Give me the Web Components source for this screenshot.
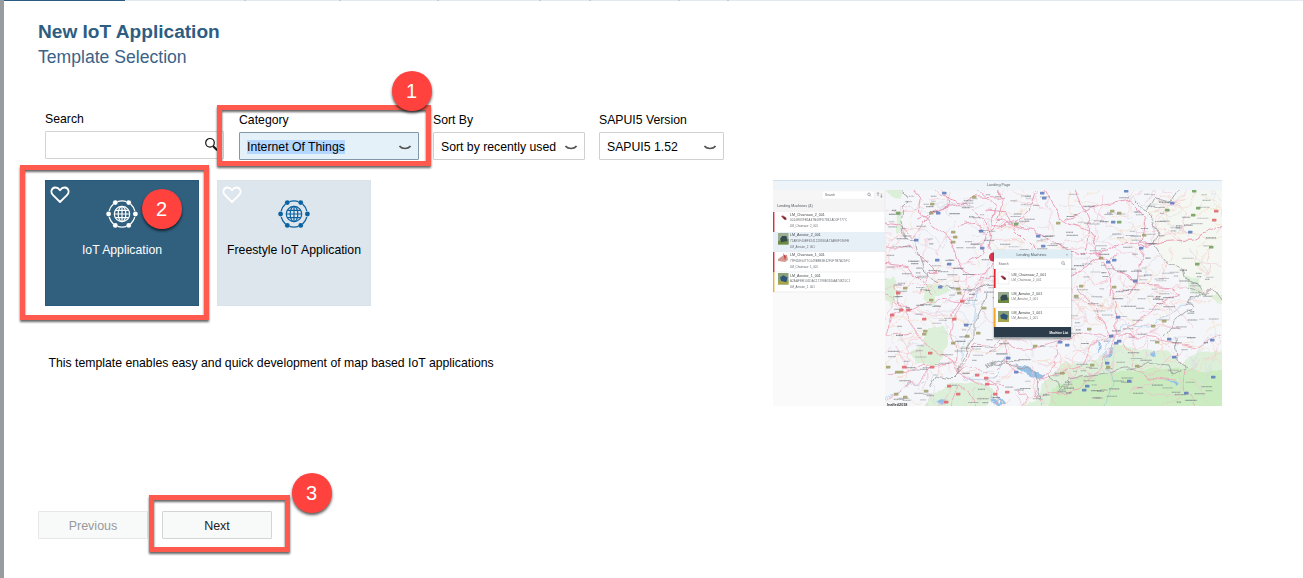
<!DOCTYPE html>
<html lang="en">
<head>
<meta charset="utf-8">
<title>New IoT Application</title>
<style>
html,body{margin:0;height:578px;overflow:hidden;background:#fff}
body{font-family:"Liberation Sans",Arial,sans-serif;font-size:12.26px;color:#000}
</style>
</head>
<body>
<iot-wizard></iot-wizard>
<script>
function define(name, html, setup) {
  const t = document.createElement('template');
  t.innerHTML = html;
  customElements.define(name, class extends HTMLElement {
    constructor() {
      super();
      this.attachShadow({mode: 'open'}).append(t.content.cloneNode(true));
    }
    connectedCallback() { if (setup) setup(this, this.shadowRoot); }
  });
}

define('field-label', `<style>:host{display:block;height:14px;line-height:14px;white-space:nowrap}</style><slot></slot>`);

define('search-field', `<style>
:host{display:block;width:179px}
.box{box-sizing:border-box;height:28px;margin-top:5px;border:1px solid #d3d3d3;border-radius:1px;display:flex;align-items:center;justify-content:flex-end;padding-right:4px}
</style><field-label><slot></slot></field-label>
<div class="box"><svg width="15" height="16" viewBox="0 0 15 16" fill="none" stroke="#111"><circle cx="6" cy="5.8" r="4.3" stroke-width="1.2"/><path d="M9.2 9.2 13.2 13.2" stroke-width="2"/></svg></div>`);

define('select-field', `<style>
:host{display:block}
.box{box-sizing:border-box;height:28px;margin-top:5px;border:1px solid #d0d0d0;border-radius:1px;display:flex;align-items:center;justify-content:space-between;padding:1px 7px 0 7px;white-space:nowrap}
:host([active]) .box{background:#e5f1f9;border-color:#8297a7}
:host([active]) .v{background:#b3d7fe}
.v{line-height:14px;margin-top:1px}
svg{display:block;margin-top:2px}
</style><field-label><slot></slot></field-label>
<div class="box"><span class="v"><slot name="value"></slot></span><svg width="12" height="6" viewBox="0 0 12 6" fill="none" stroke="#555" stroke-width="1.6"><path d="M.5 1Q2.2 3.4 6 3.5 9.8 3.4 11.5 1"/></svg></div>`);

define('template-tile', `<style>
:host{box-sizing:border-box;display:grid;grid-template-rows:18px 36px 17px;justify-items:center;width:154px;height:126px;background:#dde5ed;color:#000;--ink:#0b62a0;text-align:center;border:1px solid #dae2ea}
:host([selected]){background:#31607f;color:#fff;--ink:#fff;border-color:#28597b}
.heart{justify-self:start;margin:5px 0 0 4px}
.globe{color:var(--ink);margin-top:-1px}
.label{line-height:17px;white-space:nowrap;padding-top:7px}
</style>
<svg class="heart" width="20" height="18" viewBox="0 0 20 18" fill="none" stroke="#fff" stroke-width="1.8" stroke-linejoin="round"><path d="M10 16 2.8 8.8C.2 6.2 1.5 1.8 5.1 1.5 7.4 1.3 8.8 2.5 10 4.3 11.2 2.5 12.6 1.3 14.9 1.5 18.5 1.8 19.8 6.2 17.2 8.8Z"/></svg>
<svg class="globe" width="32" height="32" viewBox="-16 -16 32 32" fill="none" stroke="currentColor" stroke-width="1.2"><circle r="7.7"/><ellipse rx="3.8" ry="7.7"/><path d="M0-7.7V7.7M-7.7 0H7.7M-6.8-3.6H6.8M-6.8 3.6H6.8"/><path d="M-4.5-12.4Q0-13.8 4.5-12.4M8.4-10.2Q11.8-7 12.8-3M12.8 3Q11.8 7 8.4 10.2M4.5 12.4Q0 13.8-4.5 12.4M-8.4 10.2Q-11.8 7-12.8 3M-12.8-3Q-11.8-7-8.4-10.2"/><g fill="currentColor" stroke="none"><circle cx="-6.7" cy="-11.4" r="2.4"/><circle cx="6.7" cy="-11.4" r="2.4"/><circle cx="13.4" r="2.4"/><circle cx="6.7" cy="11.4" r="2.4"/><circle cx="-6.7" cy="11.4" r="2.4"/><circle cx="-13.4" r="2.4"/></g></svg>
<div class="label"><slot></slot></div>`);

define('wizard-button', `<style>
:host{box-sizing:border-box;display:flex;align-items:center;justify-content:center;width:110px;height:28px;padding-top:1px;border:1px solid #d2d4d5;border-radius:1px;background:#f8fafa;color:#222;font-size:12.5px}
:host([disabled]){border-color:#e6e8e8;color:#999}
</style><slot></slot>`);

define('callout-frame', `<style>
:host{position:absolute;box-sizing:border-box;border:5px solid #ff5a4d;filter:drop-shadow(0 2px 1px rgba(0,0,0,.6));pointer-events:none}
</style>`);

define('callout-number', `<style>
:host{position:absolute;display:flex;align-items:center;justify-content:center;box-sizing:border-box;padding:1px 1px 0 0;width:40px;height:40px;border-radius:50%;background:#ff423e;color:#fff;font-size:20px;box-shadow:0 2px 3px rgba(0,0,0,.65)}
</style><slot></slot>`);

define('top-strip', `<style>
:host{display:block;height:1px}
svg{display:block}
</style><svg width="1299" height="1"><path fill="#e3e8f1" d="M0 0H1299V1H0Z"/><path fill="#2b5b80" d="M0 0H121V1H0Z"/><path fill="#c5cad2" d="M240 0h2v1h-2zM335 0h2v1h-2zM433 0h2v1h-2zM535 0h2v1h-2zM585 0h2v1h-2zM674 0h2v1h-2zM723 0h2v1h-2z"/></svg>`);

define('map-preview', `<style>
:host{display:block;width:449px;height:226px}
svg{display:block;filter:blur(.35px)}
text{font-family:"Liberation Sans",Arial,sans-serif}
</style>
<svg width="449" height="226" viewBox="0 0 449 226">
<defs>
<clipPath id="m"><rect x="112" y="10" width="337" height="216"/></clipPath>
<filter id="wander" filterUnits="userSpaceOnUse" x="100" y="0" width="360" height="236" color-interpolation-filters="sRGB"><feTurbulence type="fractalNoise" baseFrequency=".07" numOctaves="2" seed="4"/><feDisplacementMap in="SourceGraphic" scale="10" xChannelSelector="R" yChannelSelector="G"/></filter>
<g id="car"><rect width="10" height="10" fill="#9aad91"/><path d="M0 7 10 5V10H0Z" fill="#6e8a45"/><path d="M2 5 4 2.5H8L9 7 3 8Z" fill="#344b50"/></g>
<g id="car2"><rect width="10" height="10" fill="#8aa17a"/><path d="M0 7 10 6V10H0Z" fill="#a8a64c"/><path d="M2 4 5 2 9 4 8 8 3 7Z" fill="#2d5578"/></g>
<g id="bug"><path d="M2 3 4 2.4 7 4.4 7.8 6.4 6 7 4 5.6Z" fill="#a8404a"/><path d="M4 4.2 7 5 6 6.6Z" fill="#432c32"/></g>
</defs>
<rect width="449" height="226" fill="#fafafa"/>
<g clip-path="url(#m)">
<rect x="112" y="10" width="337" height="216" fill="#f5f6f9"/>
<g filter="url(#wander)">
<g id="land" fill="#dcf0d9">
<g transform="translate(-8 -10) scale(.33333)"><path d="M360 55H415L410 80 375 78ZM350 325 390 318 400 375H350ZM388 122 408 120 412 180 395 190ZM520 340 560 360 530 375H490Z"/></g>
<g transform="translate(-8 105) scale(.33333)"><path d="M350 0H395V55L380 70 360 50ZM480 0H520L505 60 470 40ZM485 135 540 120 555 150 535 200 525 235 480 240 450 240 440 195 475 180ZM500 330 560 300 640 290 690 320 650 395H470ZM395 22 405 20V60Z"/></g>
<g transform="translate(212 105) scale(.33333)"><path d="M180 290 230 240 300 235 365 210 385 180 460 190 540 200 590 230 650 200 740 195V395H60L150 350Z"/><path d="M590 0H660L650 20 700 60 740 50V0Z" fill="#e1f0d9"/><path d="M220 300 300 270 420 260 560 250 740 260V395H170Z" fill="#caecc0"/></g>
<g transform="translate(212 -10) scale(.33333)"><path d="M480 130 500 90 570 80 640 50H740V375H650L590 320 540 270 510 225 515 170Z" fill="#f5f8f2"/><path d="M600 320 640 325 660 375H620Z"/></g>
</g>
<g fill="#94c0e8"><g transform="translate(212 105) scale(.33333)"><path d="M88 235 130 246 180 268 165 285 125 268ZM368 190 382 185 378 215 366 222ZM340 175 348 176 344 208ZM498 205 512 197 515 212 500 216ZM15 325 30 345 55 367 45 372 20 350ZM545 285 575 290 572 300Z"/></g><g transform="translate(-8 105) scale(.33333)"><path d="M520 345 540 335 530 360ZM690 320 720 350 700 355Z"/></g></g>
<g id="minor" fill="none"></g>
<g fill="none" stroke="#8abce5" stroke-width=".5"><path d="M196 122 203 110 201 138 191 157 188 182M331 226 341 203 330 170 348 145 376 146 420 120M232 177 220 200 190 199M112 217 150 200"/></g>
<g fill="none" stroke-linejoin="round">
<g transform="translate(-8 -10) scale(.33333)" stroke="#e99ab5" stroke-width="2.8"><path d="M440 55 465 85 460 130 505 165 545 195 570 250 590 300 650 320 690 280 720 300M360 160 400 165 440 205 505 125 560 110 620 80 720 85M500 55 540 80 600 100 655 150 680 190 675 240M545 80 550 110 460 150M360 230 430 232 480 270 520 310 490 310 460 370M580 170 630 160 660 190 655 245 600 280M640 60 690 110 680 160 720 170M360 280 430 290 470 340 500 375M610 370 650 330 680 320"/></g>
<g transform="translate(-8 105) scale(.33333)" stroke="#eba2b8" stroke-width="2.6"><path d="M390 0 405 40 410 75 440 115 465 165 520 205 570 235 580 265 650 300 720 305M360 25 395 55 440 75 500 45 590 50 625 30 655 0M410 75 380 95 365 150 440 145M590 55 570 100 560 155 575 190 570 235 470 245 430 265 365 265M610 0 570 75 560 100M360 345 410 315 455 290 500 245M575 265 600 245 680 265 720 225M720 150 685 185 630 180 575 265M640 375 625 340 580 305 550 370"/></g>
<g transform="translate(212 -10) scale(.33333)" stroke="#e99ab5" stroke-width="2.8"><path d="M35 55 55 90 40 140 70 165 145 185 205 210 240 240 315 255 370 240 430 210 470 220 530 215 620 210 720 160M160 55 140 110 95 150 45 170M180 55 230 155 320 180 345 260 370 275 400 250M230 155 350 100 425 90 450 110 480 160 470 230 520 215M270 55 320 175 300 240M345 260 240 335 210 375M350 275 380 330 375 375M475 235 460 300 455 350 430 375M370 280 460 345 550 350 590 375M0 120 60 125 90 180 150 240M0 195 50 145"/></g>
<g transform="translate(212 105) scale(.33333)" stroke="#eba2b8" stroke-width="2.6"><path d="M270 0 335 75 375 155 440 125 520 60 590 25M390 155 395 85 380 0M390 155 320 180 285 245 165 280M390 155 350 245 280 315 150 335M400 165 440 200 450 250 480 275 570 285M400 150 500 155 590 180 640 190 690 155 720 140M0 210 65 170 110 200 220 170 310 140 375 155M220 170 210 240 165 280 150 315 170 375M60 175 65 240 120 270M570 210 600 240 590 300 620 350 640 375M110 375 130 340 95 310M0 285 40 315 25 350"/></g>
</g>
<g fill="none" stroke="#969b9d" stroke-width=".8" stroke-linejoin="round"><path d="M129 12 136 16 135 23 130 28 128 41 131 60 142 61 146 77 150 91 158 98 175 107 200 111 219 104M157 206 162 197 178 200 187 191 186 185 202 158 202 140 214 113M212 186 225 181 235 184 242 179M373 32 382 17 399 20 406 10M363 22 374 34 385 54 382 66 393 82 410 88 412 98 428 105 433 113M412 107 432 114 439 106 449 121M391 156 402 142 420 129 414 122 432 112M274 193 283 200 286 210 296 199 317 195 335 193 348 188 366 188 373 183 395 185 399 196 414 187 404 180 402 158M219 184 242 186 261 190 267 220"/></g>
</g>
<g id="names"></g>
<g id="shields"></g>
<text x="114" y="225.5" font-size="3.8" font-weight="bold" fill="#333">leaflet/2018</text>
</g>
<rect width="449" height="10" fill="#eff4f9"/><rect width="449" height=".8" fill="#cbdcec"/>
<text x="214" y="5.9" font-size="3.8" fill="#61676c">Landing Page</text>
<rect y="10" width="112" height="10" fill="#f6f6f6"/><rect x="49" y="11" width="52" height="8" fill="#fff" stroke="#e8e8e8" stroke-width=".4"/>
<text x="52" y="16.2" font-size="3.2" fill="#666">Search</text><g fill="none" stroke="#667" stroke-width=".5"><circle cx="96" cy="14.3" r="1.3"/><path d="M97 15.3 98 16.5M105 16V12.6L104 13.6M105 12.6 106 13.6M108.4 13.6V17.4L107.4 16.4M108.4 17.4 109.4 16.4"/></g>
<rect y="20" width="112" height="12" fill="#f4f4f4"/><text x="4.2" y="26.6" font-size="3.7" fill="#4d5359">Lending Machines (4)</text>
<rect y="32" width="112" height="80" fill="#fff"/><rect y="52" width="112" height="19.5" fill="#e7eff7"/><path d="M0 71.5H112M0 92H112M0 112H112M112 10V112" stroke="#e3e5e7" stroke-width=".6"/>
<path d="M0 32H1.4V52H0ZM0 72H1.4V92H0Z" fill="#e12a31"/><path d="M0 92H1.4V112H0Z" fill="#f2ac30"/>
<use href="#bug" transform="translate(6 33)"/><use href="#car" transform="translate(5 53) scale(1.05 1.15)"/><path d="M5 79 11 75 14 75 15 80 12 82 5 81Z" fill="#d39a94"/><path d="M10 73 13 77 12 80Z" fill="#cc3935"/><use href="#car2" transform="translate(5 93) scale(1.05 1.15)"/>
<g font-size="3.6" fill="#44484c"><text x="17" y="35.7">LM_Chainsaw_2_001</text><text x="17" y="55.9">LM_Aerator_2_001</text><text x="17" y="76.2">LM_Chainsaw_1_001</text><text x="17" y="96.5">LM_Aerator_1_001</text></g>
<g font-size="2.9" fill="#686c70"><text x="17" y="41.3" textLength="57">0014E839B5A47B08FD7842AD0F777C</text><text x="17" y="47.4">LM_Chainsaw_2_001</text><text x="17" y="61.5" textLength="59">71AE5F40BF8241228D80A73AE8F590FB</text><text x="17" y="67.6">LM_Aerator_2_001</text><text x="17" y="81.8" textLength="60">79F6DE0077C049B8B3E42F0F7B7A2DFC</text><text x="17" y="87.7">LM_Chainsaw_1_001</text><text x="17" y="101.7" textLength="60">A2AAFEB105DAC17198B3DDAA74825C1</text><text x="17" y="108.1">LM_Aerator_1_001</text></g>
<circle cx="220.5" cy="77" r="4.5" fill="#d8344b"/>
<rect x="221" y="70" width="77" height="88" fill="#fff" style="filter:drop-shadow(0 1px 1px #0006)"/><rect x="221" y="70" width="77" height="8.5" fill="#dfeef4"/>
<text x="243.5" y="75.7" font-size="3.7" fill="#4d585e">Lending Machines</text><text x="293" y="75.5" font-size="3.5" fill="#678">×</text>
<text x="225.5" y="85" font-size="3.2" fill="#666">Search</text><g fill="none" stroke="#678" stroke-width=".5"><circle cx="290" cy="83" r="1.4"/><path d="M291 84 292.3 85.3"/></g>
<path d="M221 89H298M221 108H298M221 127.5H298" stroke="#e3e5e7" stroke-width=".5"/><path d="M221 89H222.6V108H221Z" fill="#e8252b"/><path d="M221 128H222.6V147H221Z" fill="#f6a528"/>
<rect x="225" y="92" width="11" height="12" fill="#fff" stroke="#ddd" stroke-width=".5"/><use href="#bug" transform="translate(225.5 93)"/><use href="#car" transform="translate(225 112) scale(1.1)"/><use href="#car2" transform="translate(225 131) scale(1.1)"/>
<g font-size="3.6" fill="#44484c"><text x="238.5" y="96">LM_Chainsaw_2_001</text><text x="238.5" y="115.2">LM_Aerator_2_001</text><text x="238.5" y="134.3">LM_Aerator_1_001</text></g><g font-size="3.1" fill="#777"><text x="238.5" y="101">LM_Chainsaw_2_001</text><text x="238.5" y="120.2">LM_Aerator_2_001</text><text x="238.5" y="139.3">LM_Aerator_1_001</text></g>
<rect x="221" y="147" width="77" height="10.5" fill="#2d3c4b"/><text x="276.5" y="153.5" font-size="3.1" font-weight="bold" fill="#fff">Machine List</text>
</svg>`, (host, root) => {
  // Fixed-seed generator keeps the side roads and place marks stable.
  let s = 71;
  const r = () => (s = (s * 16807) % 2147483647) / 2147483647;
  let minor = '', names = '', shields = '';
  const tint = ['#f3bccb', '#f6d0c4', '#d8d8e4', '#f2c1d0', '#f1dfc4'];
  for (let i = 0; i < 330; i++) {
    let x = 112 + r() * 337, y = 10 + r() * 216, a = r() * 6.28, d = `M${x.toFixed(1)} ${y.toFixed(1)}`;
    for (let j = 0; j < 6; j++) { a += (r() - .5) * 1.5; x += Math.cos(a) * 6; y += Math.sin(a) * 5; d += `L${x.toFixed(1)} ${y.toFixed(1)}`; }
    minor += `<path d="${d}" stroke="${tint[i % 5]}" stroke-width=".6"/>`;
  }
  for (let i = 0; i < 400; i++) {
    const w = 4 + r() * 8;
    const x = 112 + r() * 325, y = 13 + r() * 210;
    names += `<path d="M${x.toFixed(1)} ${y.toFixed(1)}h${w.toFixed(1)}" stroke="#70747f" stroke-width="1.1" stroke-dasharray="1.4 .3 .9 .3" opacity="${(.4 + r() * .4).toFixed(2)}"/>`;
  }
  const marks = [
    ['#5878bd', [[171,13],[165,33],[164,80],[176,84],[167,107],[143,60],[208,51],[209,68],[193,145],[269,13],[271,18],[265,56],[270,66],[353,11],[340,42],[368,68],[335,82],[341,80],[362,101],[399,23],[417,52],[345,137],[343,163],[338,156],[346,161],[334,183],[396,159],[401,177],[356,201],[314,206],[311,210],[287,162],[243,192],[294,165],[440,197],[439,160],[413,213],[235,178]]],
    ['#a09c66', [[159,24],[158,33],[180,52],[182,57],[180,62],[201,17],[132,108],[185,109],[186,113],[115,187],[124,192],[128,192],[123,214],[132,217],[153,211],[158,120],[151,154],[152,151],[205,153],[211,128],[194,156],[180,163],[339,31],[346,33],[285,43],[328,78],[308,106],[341,107],[371,55],[380,146],[384,162],[364,186],[335,187],[319,185],[289,193],[303,116],[316,149],[262,166],[391,141]]],
    ['#6b9d58', [[125,33],[421,11],[394,30],[420,35],[425,28],[346,42],[243,44],[438,67],[424,84]]],
    ['#df6066', [[125,113],[128,130],[135,130],[119,135],[151,139],[181,139],[189,121],[157,173],[131,187],[176,206],[185,214],[204,195],[213,198],[222,214],[173,222],[159,187],[441,40],[443,31],[234,212],[214,204]]]
  ];
  for (const [c, pts] of marks) for (const [x, y] of pts) shields += `<rect x="${x - 2}" y="${y - 1.2}" width="4.4" height="2.6" rx=".5" fill="${c}" opacity=".85"/>`;
  root.querySelector('#minor').innerHTML = minor;
  root.querySelector('#names').innerHTML = names;
  root.querySelector('#shields').innerHTML = shields;
});

define('iot-wizard', `<style>
:host{position:relative;display:block;box-sizing:border-box;width:1303px;height:578px;border-left:4px solid #999c9f;background:#fff;overflow:hidden}
h1,h2,p{margin:0;white-space:nowrap}
header{padding:19px 0 0 34px;color:#31608a}
h1{font-size:19.1px;line-height:24px;color:#2e5d82}
h2{font-size:17.6px;line-height:26px;font-weight:400;color:#3b6387}
main{display:flex;justify-content:space-between;padding:42px 81px 0 41px;height:295px}
.fields{display:flex;align-items:flex-start}
.fields select-field{padding-top:1px}
.c{width:180px;margin-left:15px}.s{width:152px;margin-left:14px}.v{width:125px;margin-left:14px}
.tiles{display:flex;gap:18px;margin-top:20px}
p{margin:48px 0 0 3.5px;line-height:18px}
map-preview{margin-top:68px}
footer{display:flex;gap:14px;padding:104px 0 0 34px}
</style>
<top-strip></top-strip>
<header><h1>New IoT Application</h1><h2>Template Selection</h2></header>
<main><section>
<div class="fields"><search-field>Search</search-field>
<select-field class="c" active>Category<span slot="value">Internet Of Things</span></select-field>
<select-field class="s">Sort By<span slot="value">Sort by recently used</span></select-field>
<select-field class="v">SAPUI5 Version<span slot="value">SAPUI5 1.52</span></select-field></div>
<div class="tiles"><template-tile selected>IoT Application</template-tile><template-tile>Freestyle IoT Application</template-tile></div>
<p>This template enables easy and quick development of map based IoT applications</p>
</section><map-preview></map-preview></main>
<footer><wizard-button disabled>Previous</wizard-button><wizard-button>Next</wizard-button></footer>
<callout-frame style="left:213px;top:105px;width:214px;height:61px"></callout-frame>
<callout-frame style="left:16px;top:165px;width:189px;height:155px"></callout-frame>
<callout-frame style="left:145px;top:495px;width:141px;height:57px"></callout-frame>
<callout-number style="left:388px;top:71px">1</callout-number>
<callout-number style="left:138px;top:189px">2</callout-number>
<callout-number style="left:288px;top:473px">3</callout-number>`);
</script>
</body>
</html>
